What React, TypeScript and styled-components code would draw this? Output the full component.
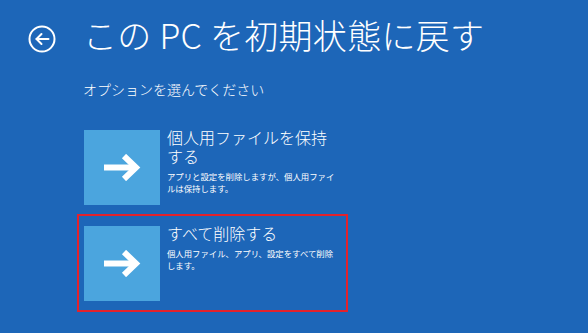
import styled, { createGlobalStyle } from 'styled-components'

const GlobalStyle = createGlobalStyle`
  html, body {
    margin: 0;
    padding: 0;
    background: #1d66b8;
  }
  body {
    font-family: "Noto Sans CJK JP", "Noto Sans", sans-serif;
    color: #ffffff;
  }
`

const Page = styled.div({
  width: "588px",
  height: "333px",
  background: "#1d66b8",
  overflow: "hidden",
  boxSizing: "border-box",
  paddingTop: "14px",
})

const Header = styled.div({
  display: "flex",
  alignItems: "center",
  gap: "27px",
  paddingLeft: "28px",
  height: "42px",
})

const BackButton = styled.button({
  background: "none",
  border: "none",
  padding: 0,
  margin: 0,
  width: "28px",
  height: "28px",
  display: "flex",
  marginTop: "7px",
  cursor: "pointer",
})

const Title = styled.h1({
  margin: 0,
  fontSize: "34px",
  fontWeight: 200,
  lineHeight: "40px",
  letterSpacing: "0.3px",
  whiteSpace: "nowrap",
})

const Body = styled.div({
  paddingLeft: "77px",
})

const Subtitle = styled.p({
  margin: "24px 0 0 6px",
  fontSize: "14px",
  lineHeight: "18px",
  fontWeight: 300,
})

const OptionList = styled.div({
  marginTop: "22px",
  display: "flex",
  flexDirection: "column",
})

const OptionRow = styled.div<{ $selected?: boolean }>(({ $selected }) => ({
  display: "flex",
  gap: "7px",
  width: "271px",
  boxSizing: "border-box",
  padding: "10px 0 9px 5px",
  border: `2px solid ${$selected ? "#e3222c" : "transparent"}`,
  marginTop: "-2px",
  cursor: "pointer",
}))

const Tile = styled.div({
  width: "76px",
  height: "75px",
  flexShrink: 0,
  background: "#4ba5de",
  display: "flex",
  alignItems: "center",
  justifyContent: "center",
})

const TextCol = styled.div({
  width: "170px",
  marginTop: "-2px",
})

const OptionTitle = styled.div({
  fontSize: "16px",
  lineHeight: "19px",
  fontWeight: 300,
})

const OptionDesc = styled.div({
  marginTop: "5px",
  fontSize: "8.4px",
  lineHeight: "11.5px",
})

const BackIcon = () => (
  <svg width="28" height="28" viewBox="0 0 28 28" fill="none" stroke="#fff" strokeWidth="2">
    <circle cx="14" cy="14" r="12.5" />
    <path d="M8.5 14 H20.5" strokeLinecap="round" />
    <path d="M13.5 9 L8.5 14 L13.5 19" strokeLinecap="round" strokeLinejoin="round" />
  </svg>
)

const ArrowIcon = () => (
  <svg width="38" height="27" viewBox="0 0 38 27" fill="none" stroke="#fff" strokeWidth="6">
    <path d="M1 13.5 H33" />
    <path d="M21 2 L33 13.5 L21 25" strokeLinejoin="miter" />
  </svg>
)

const options = [
  {
    title: "個人用ファイルを保持する",
    desc: "アプリと設定を削除しますが、個人用ファイルは保持します。",
    selected: false,
  },
  {
    title: "すべて削除する",
    desc: "個人用ファイル、アプリ、設定をすべて削除します。",
    selected: true,
  },
]

export default function App() {
  return (
    <Page>
      <GlobalStyle />
      <Header>
        <BackButton aria-label="戻る">
          <BackIcon />
        </BackButton>
        <Title>この PC を初期状態に戻す</Title>
      </Header>
      <Body>
        <Subtitle>オプションを選んでください</Subtitle>
        <OptionList>
          {options.map(opt => (
            <OptionRow key={opt.title} $selected={opt.selected}>
              <Tile>
                <ArrowIcon />
              </Tile>
              <TextCol>
                <OptionTitle>{opt.title}</OptionTitle>
                <OptionDesc>{opt.desc}</OptionDesc>
              </TextCol>
            </OptionRow>
          ))}
        </OptionList>
      </Body>
    </Page>
  )
}
